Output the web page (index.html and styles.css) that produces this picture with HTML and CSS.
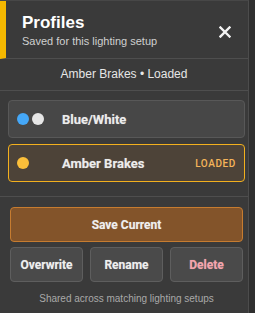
FILE: index.html
```html
<!DOCTYPE html>
<html>
<head>
<meta charset="utf-8">
<link rel="stylesheet" href="styles.css">
</head>
<body>
<div class="panel">
  <div class="header">
    <div class="titles">
      <div class="title">Profiles</div>
      <div class="subtitle">Saved for this lighting setup</div>
    </div>
    <div class="close">
      <svg width="12" height="12" viewBox="0 0 12 12"><path d="M1.5 1.5 L10.5 10.5 M10.5 1.5 L1.5 10.5" stroke="#f2f2f2" stroke-width="2.4" stroke-linecap="square"/></svg>
    </div>
  </div>
  <div class="status">Amber Brakes • Loaded</div>
  <div class="list">
    <div class="card">
      <div class="dots"><span class="dot blue"></span><span class="dot white"></span></div>
      <div class="name">Blue/White</div>
    </div>
    <div class="card active">
      <div class="dots"><span class="dot amber"></span></div>
      <div class="name">Amber Brakes</div>
      <div class="badge">LOADED</div>
    </div>
  </div>
  <div class="actions">
    <button class="btn save">Save Current</button>
    <div class="row">
      <button class="btn">Overwrite</button>
      <button class="btn">Rename</button>
      <button class="btn danger">Delete</button>
    </div>
    <div class="foot">Shared across matching lighting setups</div>
  </div>
</div>
</body>
</html>
```
FILE: styles.css
```css
html, body {
  margin: 0;
  padding: 0;
  background: #2f2f2f;
  font-family: "Liberation Sans", Arial, sans-serif;
}
.panel {
  width: 249px;
  height: 313px;
  background: #3a3a3a;
  border-top: 1px solid #474747;
  border-right: 1px solid #4c4c4c;
  box-sizing: border-box;
}
.header {
  display: flex;
  align-items: center;
  height: 57px;
  border-left: 6px solid #f5b800;
  padding-left: 16px;
  padding-right: 17px;
  border-bottom: 1px solid #4e4e4e;
}
.titles { flex: 1; }
.title {
  font-weight: bold;
  font-size: 17px;
  color: #ffffff;
  line-height: 19px;
  margin-top: 1px;
}
.subtitle {
  font-size: 11px;
  color: #d0d0d0;
  margin-top: 3px;
  line-height: 13px;
}
.close {
  width: 12px;
  height: 12px;
  display: flex;
  margin-top: 5px;
}
.status {
  height: 31px;
  line-height: 31px;
  text-align: center;
  font-size: 12px;
  color: #e6e6e6;
  border-bottom: 1px solid #4e4e4e;
}
.list {
  padding: 9px 3px 14px 8px;
  display: flex;
  flex-direction: column;
  gap: 6px;
  border-bottom: 1px solid #4e4e4e;
}
.card {
  display: flex;
  align-items: center;
  height: 38px;
  box-sizing: border-box;
  border: 1px solid #585858;
  border-radius: 4px;
  background: #474747;
  padding: 0 8px 0 8px;
}
.card.active {
  border-color: #f2b01e;
  background: #4d4338;
}
.dots {
  width: 45px;
  display: flex;
  gap: 3px;
}
.dot {
  width: 12px;
  height: 12px;
  border-radius: 50%;
  display: block;
}
.dot.blue { background: #45a8f8; }
.dot.white { background: #e6e6e6; }
.dot.amber { background: #fbbf3a; }
.name {
  flex: 1;
  font-family: Roboto, "Liberation Sans", sans-serif;
  font-weight: bold;
  font-size: 13px;
  color: #ececec;
  text-shadow: 0 0 1px rgba(255,255,255,0.4);
}
.badge {
  font-family: Roboto, "Liberation Sans", sans-serif;
  font-size: 10px;
  font-weight: 500;
  letter-spacing: 0.6px;
  color: #f5b55a;
}
.actions {
  padding: 10px 5px 0 10px;
}
.btn {
  font-family: Roboto, "Liberation Sans", sans-serif;
  font-weight: bold;
  font-size: 12px;
  color: #efefef;
  background: #4a4a4a;
  border: 1px solid #5e5e5e;
  border-radius: 4px;
  height: 35px;
  padding: 0;
  text-shadow: 0 0 1px rgba(255,255,255,0.4);
}
.btn.save {
  width: 100%;
  background: #83542a;
  border-color: #c67c30;
  display: block;
}
.row {
  display: flex;
  gap: 7px;
  margin-top: 5px;
}
.row .btn { flex: 1; }
.btn.danger { color: #f7a3ab; }
.foot {
  text-align: center;
  font-size: 10px;
  color: #a9a9a9;
  margin-top: 11px;
}
```
